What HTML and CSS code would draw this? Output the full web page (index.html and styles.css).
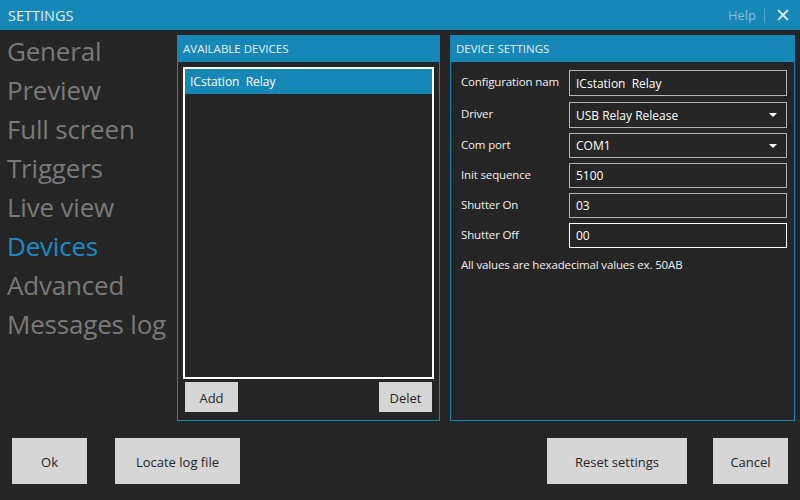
FILE: index.html
```html
<!DOCTYPE html>
<html>
<head>
<meta charset="utf-8">
<link rel="stylesheet" href="styles.css">
</head>
<body>
<div class="app">
  <div class="titlebar">
    <div class="title">SETTINGS</div>
    <div class="title-actions">
      <span class="help">Help</span>
      <span class="sep"></span>
      <svg class="close" width="12" height="12" viewBox="0 0 12 12"><path d="M1 1 L11 11 M11 1 L1 11" stroke="#d2e8f2" stroke-width="2" fill="none"/></svg>
    </div>
  </div>
  <div class="main">
    <nav class="nav">
      <div class="nav-item">General</div>
      <div class="nav-item">Preview</div>
      <div class="nav-item">Full screen</div>
      <div class="nav-item">Triggers</div>
      <div class="nav-item">Live view</div>
      <div class="nav-item active">Devices</div>
      <div class="nav-item">Advanced</div>
      <div class="nav-item">Messages log</div>
    </nav>
    <section class="panel panel-devices">
      <div class="panel-header">AVAILABLE DEVICES</div>
      <div class="panel-body devices-body">
        <div class="listbox">
          <div class="list-item selected">ICstation  Relay</div>
        </div>
        <div class="list-actions">
          <button class="btn small">Add</button>
          <button class="btn small">Delet</button>
        </div>
      </div>
    </section>
    <section class="panel panel-settings">
      <div class="panel-header">DEVICE SETTINGS</div>
      <div class="panel-body settings-body">
        <div class="form">
          <label class="lbl">Configuration nam</label>
          <div class="field tall first">ICstation  Relay</div>
          <label class="lbl">Driver</label>
          <div class="field tall combo">USB Relay Release<span class="arrow"></span></div>
          <label class="lbl">Com port</label>
          <div class="field combo">COM1<span class="arrow"></span></div>
          <label class="lbl">Init sequence</label>
          <div class="field">5100</div>
          <label class="lbl">Shutter On</label>
          <div class="field">03</div>
          <label class="lbl">Shutter Off</label>
          <div class="field focused">00</div>
        </div>
        <div class="hint">All values are hexadecimal values ex. 50AB</div>
      </div>
    </section>
  </div>
  <div class="footer">
    <div class="footer-left">
      <button class="btn big ok">Ok</button>
      <button class="btn big locate">Locate log file</button>
    </div>
    <div class="footer-right">
      <button class="btn big reset">Reset settings</button>
      <button class="btn big cancel">Cancel</button>
    </div>
  </div>
</div>
</body>
</html>
```
FILE: styles.css
```css
* { box-sizing: border-box; }
html, body { margin: 0; padding: 0; }
body {
  width: 800px;
  height: 500px;
  background: #252525;
  font-family: "Open Sans", "Noto Sans", sans-serif;
  overflow: hidden;
}
.app { display: flex; flex-direction: column; height: 500px; }
.titlebar {
  height: 30px;
  background: #1787b7;
  display: flex;
  align-items: center;
  justify-content: space-between;
  padding: 0 11px 0 8px;
}
.title { color: #e6eef2; font-size: 14.5px; }
.title-actions { display: flex; align-items: center; }
.help { color: #7fbddb; font-size: 13px; }
.sep { width: 1px; height: 15px; background: #4ea6cc; margin: 0 12px 0 8px; }
.close { display: block; }

.main { display: flex; height: 391px; }
.nav { width: 177px; padding: 2px 0 0 7px; }
.nav-item {
  height: 39px;
  line-height: 39px;
  font-size: 26px;
  color: #797979;
  white-space: nowrap;
  letter-spacing: -0.2px;
}
.nav-item.active { color: #1c8ac6; }

.panel {
  margin-top: 5px;
  height: 386px;
  border: 1px solid #1787b7;
  display: flex;
  flex-direction: column;
}
.panel-devices { width: 263px; margin-right: 10px; }
.panel-settings { width: 345px; }
.panel-header {
  height: 27px;
  background: #1787b7;
  color: #e8f0f4;
  font-size: 11.5px;
  line-height: 28px;
  margin: -1px -1px 0 -1px;
  padding-left: 6px;
}
.panel-body { flex: 1; }
.devices-body { padding: 5px 5px 8px 5px; display: flex; flex-direction: column; }
.listbox {
  height: 312px;
  border: 2px solid #ffffff;
  background: #252525;
}
.list-item {
  height: 25px;
  line-height: 26px;
  padding-left: 5px;
  font-size: 12px;
  color: #ffffff;
  white-space: pre;
}
.list-item.selected { background: #1787b7; }
.list-actions { display: flex; justify-content: space-between; padding: 3px 2px 0 2px; }

.btn {
  border: none;
  background: #d6d6d6;
  color: #262626;
  font-family: "Open Sans", "Noto Sans", sans-serif;
  padding: 0;
  cursor: default;
}
.btn.small { width: 53px; height: 30px; font-size: 13px; padding-top: 1px; }

.settings-body { padding: 8px 7px 0 10px; }
.form {
  display: grid;
  grid-template-columns: 108px 218px;
  row-gap: 5px;
}
.lbl {
  color: #f0f0f0;
  font-size: 11.5px;
  letter-spacing: -0.15px;
  padding-top: 4px;
  white-space: nowrap;
  overflow: hidden;
}
.field {
  position: relative;
  height: 25px;
  border: 1px solid #b3b3b3;
  color: #ffffff;
  font-size: 12px;
  line-height: 24px;
  padding-left: 6px;
  white-space: pre;
}
.field.tall { height: 26px; line-height: 25px; }
.field.first { margin-bottom: 1px; }
.field.focused { border-color: #ffffff; }
.arrow {
  position: absolute;
  right: 9px;
  top: 50%;
  margin-top: -2px;
  width: 0;
  height: 0;
  border-left: 4px solid transparent;
  border-right: 4px solid transparent;
  border-top: 4px solid #ffffff;
}
.hint { color: #f0f0f0; font-size: 11.5px; letter-spacing: -0.15px; margin-top: 9px; }

.footer {
  display: flex;
  justify-content: space-between;
  padding: 17px 12px 0 12px;
}
.footer-left, .footer-right { display: flex; }
.btn.big { height: 46px; font-size: 13px; padding-top: 1px; }
.ok { width: 75px; margin-right: 28px; }
.locate { width: 125px; }
.reset { width: 140px; margin-right: 26px; }
.cancel { width: 75px; }
```
